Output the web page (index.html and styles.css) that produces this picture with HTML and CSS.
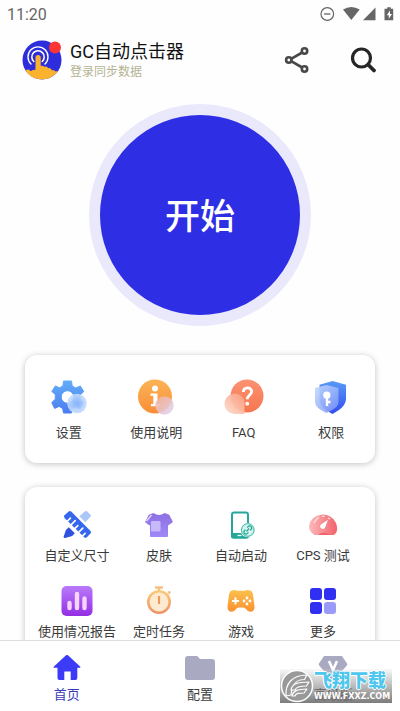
FILE: index.html
```html
<!DOCTYPE html>
<html lang="zh-CN">
<head>
  <meta charset="UTF-8">
  <meta name="viewport" content="width=device-width, initial-scale=1.0">
  <title>GC自动点击器</title>
  <link rel="stylesheet" href="styles.css">
</head>
<body>

<div class="status-bar">
  <span class="clock">11:20</span>
  <svg class="status-icons" width="76" height="16" viewBox="0 0 76 16">
    <circle cx="7.300" cy="8" r="6.300" fill="none" stroke="#666" stroke-width="1.200"/>
    <path d="M4 8h6.400" stroke="#666" stroke-width="1.300"/>
    <path d="M23 3.600Q31.300 -1.500 39.700 3.600L31.300 14Z" fill="#666"/>
    <path d="M55.500 1.500V14.300H43Z" fill="#666"/>
    <path d="M67.200 1.200h3.600v1.500h2.400v11.600h-8.700V2.700h2.700z" fill="#666"/>
    <path d="M70 4.500l-3.200 4.800h2v3.500l3.200-4.900h-2z" fill="#fff"/>
  </svg>
</div>

<header>
  <svg class="avatar" width="40" height="40" viewBox="0 0 40 40">
    <defs>
      <clipPath id="avatar-clip"><circle cx="20" cy="20" r="19.500"/></clipPath>
    </defs>
    <g clip-path="url(#avatar-clip)">
      <rect width="40" height="40" fill="#2d2ddb"/>
      <g fill="none" stroke="#fff" stroke-linecap="round">
        <path d="M9 24A10 10 0 1 1 23 24" stroke-width="1.400"/>
        <path d="M11.800 21.500A6.200 6.200 0 1 1 20.200 21.500" stroke-width="1.500"/>
      </g>
      <path d="M13.500 30V17.500a2.600 2.600 0 0 1 5.200 0V26c1-.6 3-.4 3.600 1 1.200-.8 3.200-.4 3.800 1.200 1.600-.6 3.400.4 3.800 2.200 1.600-.6 3 0 3.600 1 2-.6 3.500 0 4.500 1V42H4V32z" fill="#fbb32f"/>
      <path d="M6 29.500c1.500 0 2.500 1 2.500 2.500 1.500-2 3.500-2.500 6-2v12H0V31z" fill="#fbb32f"/>
    </g>
    <circle cx="33" cy="7.500" r="6" fill="#fb3434"/>
  </svg>
  <div class="app-title">
    <h1>GC自动点击器</h1>
    <a href="#login">登录同步数据</a>
  </div>
  <button class="icon-button" aria-label="分享">
    <svg width="28" height="28" viewBox="0 0 28 28" fill="none" stroke="#484848" stroke-width="2.600">
      <path d="M8.500 12.600L19.200 6.500M8.500 15.400L19.200 21.500"/>
      <circle cx="5.800" cy="14" r="2.700"/>
      <circle cx="21.500" cy="5" r="2.700"/>
      <circle cx="21.500" cy="23" r="2.700"/>
    </svg>
  </button>
  <button class="icon-button" aria-label="搜索">
    <svg width="28" height="28" viewBox="0 0 28 28" fill="none" stroke="#262626" stroke-linecap="round">
      <circle cx="12.500" cy="12" r="9" stroke-width="3.200"/>
      <path d="M19.500 19L25 24.500" stroke-width="3.800"/>
    </svg>
  </button>
</header>

<main>
  <button class="start-button">开始</button>

  <section class="card card-top">
    <a class="item" href="#settings">
      <svg width="36" height="36" viewBox="0 0 36 36">
        <defs>
          <linearGradient id="gear" x1="0" y1="0" x2="0" y2="1"><stop offset="0" stop-color="#62adf8"/><stop offset="1" stop-color="#4b7cf0"/></linearGradient>
          <radialGradient id="gear-dot"><stop offset="0" stop-color="#8db8fb"/><stop offset="1" stop-color="#c6ddfd"/></radialGradient>
        </defs>
        <path fill="url(#gear)" stroke="url(#gear)" stroke-linejoin="round" fill-rule="evenodd" d="M12.500 2h8l.7 5 3.500 2 4.600-2 3.500 5.600-3.800 3.400v4.500l3.700 3.200-3.700 5.800-4.500-2-3.400 2-.8 4.500h-7.800l-.8-4.500-3.600-2.100-4.500 2L.8 23.600 4.300 20.200v-4.600L.8 12.400l3.600-5.500 4.200 1.900 3.300-1.900zM16.500 11.700a6.300 6.300 0 1 0 0 12.600 6.300 6.300 0 0 0 0-12.600z"/>
        <circle cx="26" cy="24.500" r="9.800" fill="url(#gear-dot)" opacity=".9"/>
      </svg>
      <span>设置</span>
    </a>
    <a class="item" href="#help">
      <svg width="36" height="36" viewBox="0 0 36 36">
        <defs>
          <linearGradient id="info" x1="0" y1="0" x2="0" y2="1"><stop offset="0" stop-color="#fbb455"/><stop offset="1" stop-color="#fa8d38"/></linearGradient>
          <linearGradient id="info-dot" x1="0" y1="0" x2="1" y2="1"><stop offset="0" stop-color="#f5b09a"/><stop offset="1" stop-color="#ddd5fb"/></linearGradient>
        </defs>
        <circle cx="17" cy="17.500" r="17" fill="url(#info)"/>
        <circle cx="17" cy="9.500" r="3" fill="#fff"/>
        <path d="M12.500 14.500h7V25H22v2.200h-9V25h2.300v-8.200h-2.800z" fill="#fff"/>
        <circle cx="26.500" cy="26.500" r="9.200" fill="url(#info-dot)" opacity=".88"/>
      </svg>
      <span>使用说明</span>
    </a>
    <a class="item" href="#faq">
      <svg width="40" height="36" viewBox="0 0 40 36">
        <defs>
          <linearGradient id="faq" x1="0" y1="0" x2="0" y2="1"><stop offset="0" stop-color="#fb9272"/><stop offset="1" stop-color="#f7764f"/></linearGradient>
          <linearGradient id="faq-dot" x1="1" y1="0" x2="0" y2="1"><stop offset="0" stop-color="#fb9f80"/><stop offset="1" stop-color="#fddccf"/></linearGradient>
        </defs>
        <circle cx="23" cy="17" r="16.500" fill="url(#faq)"/>
        <path d="M19.300 13c.2-5.400 8.300-5.200 8.300-.6 0 3.800-4.400 3.800-4.400 7.900" fill="none" stroke="#fff" stroke-width="2.800"/>
        <circle cx="23.200" cy="24.700" r="1.900" fill="#fff"/>
        <path d="M20.500 35H10.500A10.200 10.200 0 1 1 20.500 22.500z" fill="url(#faq-dot)" opacity=".93"/>
      </svg>
      <span>FAQ</span>
    </a>
    <a class="item" href="#permissions">
      <svg width="36" height="36" viewBox="0 0 36 36">
        <defs>
          <linearGradient id="shield" x1="0" y1="0" x2="0" y2="1"><stop offset="0" stop-color="#579af7"/><stop offset="1" stop-color="#354cf0"/></linearGradient>
          <linearGradient id="shield-front" x1="0" y1="0" x2="1" y2="1"><stop offset="0" stop-color="#c6dcfd"/><stop offset="1" stop-color="#7390f6"/></linearGradient>
        </defs>
        <path d="M19.500 2L33 5.700V20c0 6.500-7 11.500-13.500 15C12.500 31.500 6.500 26.500 6.500 20V5.700z" fill="url(#shield)"/>
        <path d="M13.500 6L25.500 9v14c0 5-6 8-12 11C7.500 31 2 28 2 22.500V9z" fill="url(#shield-front)" opacity=".9"/>
        <circle cx="13.800" cy="16.200" r="3.600" fill="#fff"/>
        <path d="M14 18.500V27M14.500 23h3" stroke="#fff" stroke-width="2.400"/>
      </svg>
      <span>权限</span>
    </a>
  </section>

  <section class="card card-tools">
    <a class="item" href="#size">
      <svg width="32" height="32" viewBox="-1 -1 32 32">
        <path d="M20.500 3.500l2.500-2.200q1-.8 2 0l3.500 3.500q.8 1 0 2l-5.200 5.500-6-6z" fill="#abc7f7"/>
        <path d="M2.500 5.300L6.600 1.600q1.400-1 2.600 0L28.500 21q1 1.200 0 2.500L24.800 27.300q-1.300 1-2.600 0L2.500 7.900q-1-1.300 0-2.600z" fill="#3566ee"/>
        <path d="M5.600 11l2.800-2.800M9.200 14.600l4-4M13 18.400l2.800-2.800M16.800 22.200l4-4M20.500 26l2.600-2.600" stroke="#fff" stroke-width="1.700" stroke-linecap="round"/>
        <path d="M6.800 17.200l6 6-2.600 2.800-7 2q-1.700.2-1.500-1.500L3.900 20z" fill="#3052e0"/>
      </svg>
      <span>自定义尺寸</span>
    </a>
    <a class="item" href="#skin">
      <svg width="32" height="32" viewBox="-1 -1 32 32">
        <defs>
          <linearGradient id="shirt" x1="0" y1="0" x2="0" y2="1"><stop offset="0" stop-color="#8e70e2"/><stop offset="1" stop-color="#9f88f8"/></linearGradient>
        </defs>
        <path d="M9.500 3Q15 7 20.500 3l4.700 1.700L29 12l-4.500 3.300L24 15v11q0 1-1 1H7q-1 0-1-1V15l-1 .3L1 12l3.800-7.300z" fill="url(#shirt)"/>
        <rect x="7" y="11" width="9.500" height="10.500" rx="1" fill="#c8b9fb"/>
        <path d="M2.500 11L7.500 5" stroke="#dbd1fd" stroke-width="1.500"/>
      </svg>
      <span>皮肤</span>
    </a>
    <a class="item" href="#autostart">
      <svg width="32" height="32" viewBox="-1 -1 32 32">
        <rect x="6" y="2.500" width="16" height="25" rx="2" fill="#fff" stroke="#25a799" stroke-width="2"/>
        <path d="M5 23h18v3.500q0 2-2 2H7q-2 0-2-2z" fill="#25a799"/>
        <path d="M11.500 25.500h4" stroke="#fff" stroke-width="1.300"/>
        <circle cx="21.800" cy="20" r="7.300" fill="#e6faf5"/>
        <circle cx="21.800" cy="20" r="6.300" fill="#d5f4ed" stroke="#37b5a4"/>
        <g transform="rotate(-48 21.800 20)" fill="none" stroke="#25a799" stroke-width="1.200">
          <path d="M20.500 18h-1.500a2 2 0 0 0 0 4h1.500M23.100 18h1.500a2 2 0 0 1 0 4h-1.500M19.800 20h4"/>
        </g>
      </svg>
      <span>自动启动</span>
    </a>
    <a class="item" href="#cps">
      <svg width="32" height="32" viewBox="-1 -1 32 32">
        <defs>
          <linearGradient id="gauge" x1="0" y1="0" x2="1" y2="0"><stop offset="0" stop-color="#fdb9b9"/><stop offset="1" stop-color="#f2626c"/></linearGradient>
        </defs>
        <path d="M6.500 25Q1 22 1 16A14 13 0 0 1 28 13q2.500 7-.5 10.500-1 1.500-3 1.500z" fill="url(#gauge)"/>
        <path d="M10 25q5-4 11-1l3 1z" fill="#f2626c"/>
        <path d="M6 13q1.500-4 5-5.700M14 6.300h2.500M20 7.800l2 1.500" stroke="#ffdede" stroke-width="1.300" fill="none"/>
        <path d="M20 9.700l-3 8.100a2.600 2.600 0 1 1-4-3.300z" fill="#fff"/>
      </svg>
      <span>CPS 测试</span>
    </a>
    <a class="item" href="#report">
      <svg width="32" height="32" viewBox="0 0 32 32">
        <defs>
          <linearGradient id="report" x1="0" y1="0" x2="0" y2="1"><stop offset="0" stop-color="#b97afa"/><stop offset="1" stop-color="#942ee4"/></linearGradient>
        </defs>
        <rect x=".5" y="1" width="31" height="30" rx="5" fill="url(#report)"/>
        <path d="M8.500 18v5M16 9v14M23.500 13.500V23" stroke="#f5d5fb" stroke-width="4.400" stroke-linecap="round"/>
      </svg>
      <span>使用情况报告</span>
    </a>
    <a class="item" href="#timer">
      <svg width="32" height="32" viewBox="0 0 32 32">
        <defs>
          <linearGradient id="timer" x1="0" y1="0" x2="0" y2="1"><stop offset="0" stop-color="#f9ca7d"/><stop offset="1" stop-color="#ef9367"/></linearGradient>
        </defs>
        <path d="M12 2.500h8M16 3v4M25 8l2.500-1" stroke="#f5c281" stroke-width="2.600"/>
        <circle cx="16" cy="17" r="10.700" fill="#fdebd1" stroke="url(#timer)" stroke-width="2.600"/>
        <path d="M16 11v8" stroke="#ef9a5c" stroke-width="2.200"/>
      </svg>
      <span>定时任务</span>
    </a>
    <a class="item" href="#games">
      <svg width="32" height="32" viewBox="0 0 32 32">
        <defs>
          <linearGradient id="pad" x1="0" y1="0" x2="0" y2="1"><stop offset="0" stop-color="#fbc04e"/><stop offset="1" stop-color="#fa9130"/></linearGradient>
        </defs>
        <path d="M7 5.500q3-1 5 .3h8q2-1.300 5-.3 2.500.5 3 4l1.500 11.500q.4 5-3.500 5.800-3 .4-5-2.800-1-1.500-3-1.500h-4q-2 0-3 1.500-2 3.200-5 2.800-3.900-.8-3.500-5.800L4 9.500q.5-3.500 3-4z" fill="url(#pad)"/>
        <path d="M10.500 12.500v7M7 16h7" stroke="#fff" stroke-width="2"/>
        <g fill="#fff"><circle cx="22" cy="13" r="1.400"/><circle cx="22" cy="19" r="1.400"/><circle cx="19" cy="16" r="1.400"/><circle cx="25" cy="16" r="1.400"/></g>
      </svg>
      <span>游戏</span>
    </a>
    <a class="item" href="#more">
      <svg width="32" height="32" viewBox="0 0 32 32" fill="#3030f3">
        <rect x="3" y="3" width="12" height="12" rx="3"/>
        <rect x="17" y="3" width="12" height="12" rx="3"/>
        <rect x="3" y="17" width="12" height="12" rx="3"/>
        <rect x="17" y="17" width="12" height="12" rx="3" fill="#9a9af7"/>
      </svg>
      <span>更多</span>
    </a>
  </section>
</main>

<nav class="tab-bar">
  <a class="tab active" href="#home">
    <svg width="32" height="28" viewBox="0 0 32 28">
      <path d="M15 1.300q1-.8 2 0L29.300 12.800q.6 1-.5 1H26.300V24q0 2-2 2h-4.600v-8.500h-6.400V26H8.500q-2 0-2-2V13.800H3.200q-1.100 0-.5-1z" fill="#3b3bf8"/>
    </svg>
    <span>首页</span>
  </a>
  <a class="tab" href="#config">
    <svg width="32" height="28" viewBox="0 0 32 28">
      <path d="M4 2h8.500q1 0 1.700 1L16 5h12q3 0 3 3v15q0 3-3 3H4q-3 0-3-3V5q0-3 3-3z" fill="#a9a9c1"/>
    </svg>
    <span>配置</span>
  </a>
  <a class="tab" href="#premium">
    <svg width="32" height="28" viewBox="0 0 32 28">
      <path d="M7 2h18l5 7.500q.5 1-.2 2L17 26q-1 1-2 0L2.200 11.500q-.7-1-.2-2z" fill="#a9a9c1"/>
      <path d="M12 7l4 9 4-9" fill="none" stroke="#fff" stroke-width="2.600"/>
    </svg>
    <span>高级版</span>
  </a>
</nav>

<div class="watermark">
  <svg width="34" height="34" viewBox="0 0 34 34">
    <circle cx="17" cy="17" r="15.500" fill="#999" stroke="#fff" stroke-width="1.500"/>
    <g fill="#9b9b9b" stroke="#fff" stroke-width="1.200" stroke-linejoin="round">
      <path d="M6 27C5 15 12 6 27 6l-2.500 4.500C16 10.500 12 15 11 26z"/>
      <path d="M11 21c1-6 6-8 18-8l-2.500 4C19 17 16 18 15 21z"/>
      <path d="M12 27c1-5 5-7 15-7l-3 4c-5 0-8 0-9 3z"/>
    </g>
  </svg>
  <div class="watermark-text">
    <strong>飞翔下载</strong>
    <small>WWW.FXXZ.COM</small>
  </div>
</div>

</body>
</html>
```
FILE: styles.css
```css
* {
  box-sizing: border-box;
}

body {
  display: flex;
  flex-direction: column;
  height: 100vh;
  margin: 0;
  overflow: hidden;
  background: #fefefe;
  color: #333;
  font-family: Roboto, "Noto Sans CJK SC", sans-serif;
}

a {
  color: inherit;
  text-decoration: none;
}

button {
  padding: 0;
  border: none;
  background: none;
  font-family: inherit;
  cursor: pointer;
}

svg {
  display: block;
  flex: none;
}

.status-bar {
  display: flex;
  flex: none;
  align-items: center;
  justify-content: space-between;
  height: 28px;
  padding: 0 4px 0 7px;
  color: #666;
  font-size: 16px;
}

header {
  display: flex;
  flex: none;
  align-items: center;
  height: 64px;
  padding: 0 23px 0 22px;
}

.app-title {
  flex: 1;
  margin-left: 8px;
  padding-top: 2px;
}

.app-title h1 {
  margin: 0;
  color: #111;
  font-size: 18px;
  font-weight: 400;
  line-height: 22px;
}

.app-title a {
  display: block;
  color: #b5b394;
  font-size: 12px;
  line-height: 18px;
}

.icon-button + .icon-button {
  margin-left: 38px;
}

main {
  flex: 1;
  min-height: 0;
  padding: 12px 25px 0;
  overflow: hidden;
}

.start-button {
  display: block;
  width: 222px;
  height: 222px;
  margin: 0 auto 29px;
  padding-bottom: 3px;
  border: 11px solid #eae9fc;
  border-radius: 50%;
  background: #2e2ee5;
  color: #fff;
  font-size: 35px;
  font-weight: 500;
}

.card {
  display: grid;
  grid-template-columns: repeat(4, 1fr);
  border-radius: 12px;
  background: #fff;
  box-shadow: 0 1px 6px rgba(0, 0, 0, 0.24);
}

.card-top {
  margin-bottom: 24px;
  padding: 24px 0 21px;
}

.card-tools {
  row-gap: 20px;
  padding: 22px 11px 20px;
}

.item {
  display: flex;
  flex-direction: column;
  align-items: center;
  color: #3a3a3a;
  font-size: 13px;
  line-height: 18px;
  white-space: nowrap;
}

.card-top .item {
  gap: 9px;
}

.card-tools .item {
  gap: 6px;
}

.tab-bar {
  display: grid;
  flex: none;
  grid-template-columns: repeat(3, 1fr);
  height: 71px;
  padding-top: 13px;
  border-top: 1px solid #ddd;
  background: #fff;
}

.tab {
  display: flex;
  flex-direction: column;
  align-items: center;
  gap: 4px;
  color: #3a3a3a;
  font-size: 13px;
  line-height: 18px;
}

.tab.active {
  color: #3c3cba;
}

/* overlay in the bottom right corner */
.watermark {
  position: absolute;
  right: 8px;
  bottom: 8px;
  display: flex;
  align-items: center;
  background: linear-gradient(rgba(225, 225, 225, 0.2), rgba(110, 110, 110, 0.9));
  pointer-events: none;
}

.watermark-text {
  display: flex;
  flex-direction: column;
  width: 78px;
  padding-top: 2px;
  white-space: nowrap;
}

.watermark-text strong {
  color: #4fc6ee;
  font-size: 18px;
  font-weight: 900;
  line-height: 20px;
  text-shadow: 1px 0 #fff, -1px 0 #fff, 0 1px #fff, 0 -1px #fff;
}

.watermark-text small {
  color: #fff;
  font-family: "DejaVu Sans", sans-serif;
  font-size: 8px;
  font-weight: 700;
  line-height: 12px;
}
```
